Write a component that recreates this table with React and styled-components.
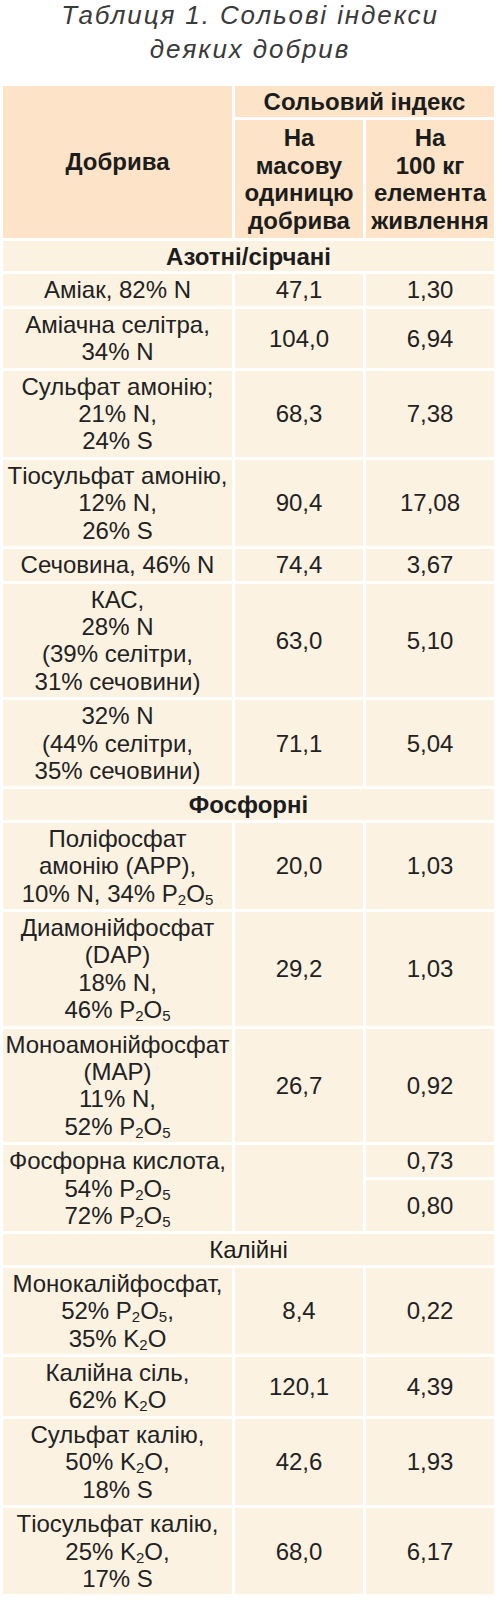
import React from "react";
import styled, { createGlobalStyle } from "styled-components";

const Global = createGlobalStyle`
  html, body { margin: 0; padding: 0; background: #ffffff; }
  body { font-family: "Liberation Sans", Arial, sans-serif; color: #1f1f1f; }
`;

const Page = styled.div`
  width: 500px;
  padding: 0;
`;

const Title = styled.h1`
  margin: -2px 0 17px;
  font-family: "Liberation Sans", Arial, sans-serif;
  font-style: italic;
  font-weight: normal;
  font-size: 26px;
  line-height: 34px;
  letter-spacing: 1.9px;
  text-align: center;
  color: #3a3a3a;
`;

const Table = styled.table`
  width: 497px;
  table-layout: fixed;
  border-collapse: separate;
  border-spacing: 3px;
  font-family: "Liberation Sans", Arial, sans-serif;
  font-size: 24px;
  line-height: 27.4px;
`;

const HeadCell = styled.th`
  background: #fde4c8;
  font-weight: bold;
  color: #1c1c1c;
  text-align: center;
  vertical-align: middle;
  padding: ${(p) => (p.$tall ? "4px 0" : "2px 0")};
`;

const SectionCell = styled.td`
  background: #fcf2e2;
  text-align: center;
  font-weight: ${(p) => (p.$bold ? "bold" : "normal")};
  padding: 2px 0 1px;
  color: #1c1c1c;
`;

const Cell = styled.td`
  background: #fcf2e2;
  text-align: center;
  vertical-align: middle;
  padding: 2px 0;
  color: #222;
`;

const Sub = styled.sub`
  font-size: 15px;
  line-height: 0;
  vertical-align: -3px;
`;

const P2O5 = () => (
  <>
    P<Sub>2</Sub>O<Sub>5</Sub>
  </>
);
const K2O = () => (
  <>
    K<Sub>2</Sub>O
  </>
);

const Lines = ({ lines }) =>
  lines.map((l, i) => (
    <React.Fragment key={i}>
      {i > 0 && <br />}
      {l}
    </React.Fragment>
  ));

const Section = ({ children, bold }) => (
  <tr>
    <SectionCell colSpan={3} $bold={bold}>
      {children}
    </SectionCell>
  </tr>
);

const Row = ({ name, a, b }) => (
  <tr>
    <Cell>
      <Lines lines={name} />
    </Cell>
    <Cell>{a}</Cell>
    <Cell>{b}</Cell>
  </tr>
);

export default function App() {
  return (
    <Page>
      <Global />
      <Title>
        Таблиця 1. Сольові індекси
        <br />
        деяких добрив
      </Title>
      <Table>
        <colgroup>
          <col style={{ width: "229px" }} />
          <col style={{ width: "128px" }} />
          <col style={{ width: "128px" }} />
        </colgroup>
        <thead>
          <tr>
            <HeadCell rowSpan={2}>Добрива</HeadCell>
            <HeadCell colSpan={2}>Сольовий індекс</HeadCell>
          </tr>
          <tr>
            <HeadCell $tall>
              На
              <br />
              масову
              <br />
              одиницю
              <br />
              добрива
            </HeadCell>
            <HeadCell $tall>
              На
              <br />
              100 кг
              <br />
              елемента
              <br />
              живлення
            </HeadCell>
          </tr>
        </thead>
        <tbody>
          <Section bold>Азотні/сірчані</Section>
          <Row name={["Аміак, 82% N"]} a="47,1" b="1,30" />
          <Row name={["Аміачна селітра,", "34% N"]} a="104,0" b="6,94" />
          <Row name={["Сульфат амонію;", "21% N,", "24% S"]} a="68,3" b="7,38" />
          <Row name={["Тіосульфат амонію,", "12% N,", "26% S"]} a="90,4" b="17,08" />
          <Row name={["Сечовина, 46% N"]} a="74,4" b="3,67" />
          <Row
            name={["КАС,", "28% N", "(39% селітри,", "31% сечовини)"]}
            a="63,0"
            b="5,10"
          />
          <Row
            name={["32% N", "(44% селітри,", "35% сечовини)"]}
            a="71,1"
            b="5,04"
          />
          <Section bold>Фосфорні</Section>
          <Row
            name={[
              "Поліфосфат",
              "амонію (APP),",
              <>
                10% N, 34% <P2O5 />
              </>,
            ]}
            a="20,0"
            b="1,03"
          />
          <Row
            name={[
              "Диамонійфосфат",
              "(DAP)",
              "18% N,",
              <>
                46% <P2O5 />
              </>,
            ]}
            a="29,2"
            b="1,03"
          />
          <Row
            name={[
              "Моноамонійфосфат",
              "(MAP)",
              "11% N,",
              <>
                52% <P2O5 />
              </>,
            ]}
            a="26,7"
            b="0,92"
          />
          <tr>
            <Cell rowSpan={2}>
              Фосфорна кислота,
              <br />
              54% <P2O5 />
              <br />
              72% <P2O5 />
            </Cell>
            <Cell rowSpan={2} />
            <Cell style={{ height: "27px" }}>0,73</Cell>
          </tr>
          <tr>
            <Cell>0,80</Cell>
          </tr>
          <Section>Калійні</Section>
          <Row
            name={[
              "Монокалійфосфат,",
              <>
                52% <P2O5 />,
              </>,
              <>
                35% <K2O />
              </>,
            ]}
            a="8,4"
            b="0,22"
          />
          <Row
            name={[
              "Калійна сіль,",
              <>
                62% <K2O />
              </>,
            ]}
            a="120,1"
            b="4,39"
          />
          <Row
            name={[
              "Сульфат калію,",
              <>
                50% <K2O />,
              </>,
              "18% S",
            ]}
            a="42,6"
            b="1,93"
          />
          <Row
            name={[
              "Тіосульфат калію,",
              <>
                25% <K2O />,
              </>,
              "17% S",
            ]}
            a="68,0"
            b="6,17"
          />
        </tbody>
      </Table>
    </Page>
  );
}
